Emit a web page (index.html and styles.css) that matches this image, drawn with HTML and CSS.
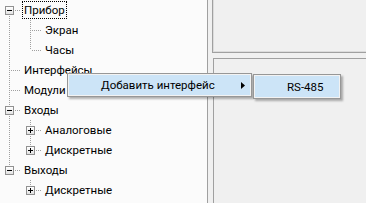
FILE: index.html
```html
<!DOCTYPE html>
<html lang="ru">
<head>
<meta charset="utf-8">
<title>Tree</title>
<link rel="stylesheet" href="styles.css">
</head>
<body>
<div class="app">
  <div class="tree">
    <div class="row"><span class="cell own-bot"><span class="box minus"></span></span><span class="label focus">Прибор</span></div>
    <div class="row"><span class="cell anc"></span><span class="cell own-full"></span><span class="label">Экран</span></div>
    <div class="row"><span class="cell anc"></span><span class="cell own-top"></span><span class="label">Часы</span></div>
    <div class="row"><span class="cell own-full"></span><span class="label">Интерфейсы</span></div>
    <div class="row"><span class="cell own-full"></span><span class="label">Модули расширения</span></div>
    <div class="row"><span class="cell own-full"><span class="box minus"></span></span><span class="label">Входы</span></div>
    <div class="row"><span class="cell anc"></span><span class="cell own-full"><span class="box plus"></span></span><span class="label">Аналоговые</span></div>
    <div class="row"><span class="cell anc"></span><span class="cell own-top"><span class="box plus"></span></span><span class="label">Дискретные</span></div>
    <div class="row"><span class="cell own-top"><span class="box minus"></span></span><span class="label">Выходы</span></div>
    <div class="row"><span class="cell"></span><span class="cell own-top"><span class="box plus"></span></span><span class="label">Дискретные</span></div>
  </div>
  <div class="right">
    <div class="group g1"></div>
    <div class="group g2"></div>
  </div>
  <div class="menus">
    <div class="menu main">
      <div class="item">
        <span>Добавить интерфейс</span>
        <svg class="arrow" width="4" height="7" viewBox="0 0 4 7"><polygon points="0,0 4,3.5 0,7" fill="#000"/></svg>
      </div>
    </div>
    <div class="menu sub">
      <div class="item"><span>RS-485</span></div>
    </div>
  </div>
</div>
</body>
</html>
```
FILE: styles.css
```css
html, body {
  margin: 0;
  padding: 0;
}
body {
  font-family: Roboto, "Noto Sans", sans-serif;
  font-size: 11.5px;
  color: #000;
  background: #f0f0f0;
}
.app {
  position: relative;
  display: flex;
  width: 366px;
  height: 203px;
  overflow: hidden;
}
.tree {
  box-sizing: border-box;
  width: 208px;
  flex: none;
  background: #fbfbfb;
  border-right: 1px solid #a0a0a0;
  display: flex;
  flex-direction: column;
}
.row {
  display: flex;
  align-items: center;
  height: 20px;
  flex: none;
}
.cell {
  width: 21px;
  height: 20px;
  flex: none;
  display: flex;
  align-items: flex-start;
  background-repeat: no-repeat;
}
.anc {
  background-image: repeating-linear-gradient(to bottom, #a0a0a0 0 1px, transparent 1px 2px);
  background-position: 9px 0;
  background-size: 1px 20px;
}
.own-full {
  background-image:
    repeating-linear-gradient(to bottom, #a0a0a0 0 1px, transparent 1px 2px),
    repeating-linear-gradient(to right, #a0a0a0 0 1px, transparent 1px 2px);
  background-position: 9px 0, 11px 10px;
  background-size: 1px 20px, 10px 1px;
}
.own-top {
  background-image:
    repeating-linear-gradient(to bottom, #a0a0a0 0 1px, transparent 1px 2px),
    repeating-linear-gradient(to right, #a0a0a0 0 1px, transparent 1px 2px);
  background-position: 9px 0, 11px 10px;
  background-size: 1px 10px, 10px 1px;
}
.own-bot {
  background-image:
    repeating-linear-gradient(to bottom, #a0a0a0 0 1px, transparent 1px 2px),
    repeating-linear-gradient(to right, #a0a0a0 0 1px, transparent 1px 2px);
  background-position: 9px 12px, 11px 10px;
  background-size: 1px 8px, 10px 1px;
}
.box {
  box-sizing: border-box;
  width: 9px;
  height: 9px;
  margin: 6px 0 0 5px;
  border: 1px solid #919191;
  background-color: #f4f4f4;
  background-repeat: no-repeat;
}
.minus {
  background-image: linear-gradient(#000, #000), linear-gradient(#ffffff, #e2e2e2);
  background-position: 1px 3px, 0 0;
  background-size: 5px 1px, 100% 100%;
}
.plus {
  background-image: linear-gradient(#000, #000), linear-gradient(#000, #000), linear-gradient(#ffffff, #e2e2e2);
  background-position: 1px 3px, 3px 1px, 0 0;
  background-size: 5px 1px, 1px 5px, 100% 100%;
}
.label {
  margin-left: 1px;
  padding: 0 1px;
  border: 1px solid transparent;
  line-height: 16px;
  white-space: nowrap;
}
.focus {
  border: 1px dotted #000;
}
.right {
  flex: 1;
  display: flex;
  flex-direction: column;
  gap: 5px;
  padding-left: 4px;
  background: #f0f0f0;
}
.group {
  box-sizing: border-box;
  border: 1px solid #a0a0a0;
  border-right: none;
}
.g1 {
  height: 53px;
  border-top: none;
  box-shadow: inset 1px -1px 0 #dcdcdc;
  flex: none;
}
.g2 {
  flex: 1;
  margin-left: 1px;
  border-bottom: none;
}
.menus {
  position: absolute;
  left: 67px;
  top: 73px;
  display: flex;
  align-items: flex-start;
  gap: 1px;
}
.menu {
  box-sizing: border-box;
  border: 1px solid #979797;
  padding: 1px;
  background: #f2f2f2;
  box-shadow: 2px 2px 2px rgba(0, 0, 0, 0.3);
  display: flex;
}
.main {
  width: 185px;
  height: 24px;
}
.sub {
  width: 88px;
  height: 25px;
  margin-top: 1px;
}
.item {
  flex: 1;
  display: flex;
  align-items: center;
  justify-content: space-between;
  background: #cce4f7;
  padding-left: 32px;
  padding-right: 5px;
  white-space: nowrap;
  line-height: 16px;
}
.arrow {
  display: block;
}
```
